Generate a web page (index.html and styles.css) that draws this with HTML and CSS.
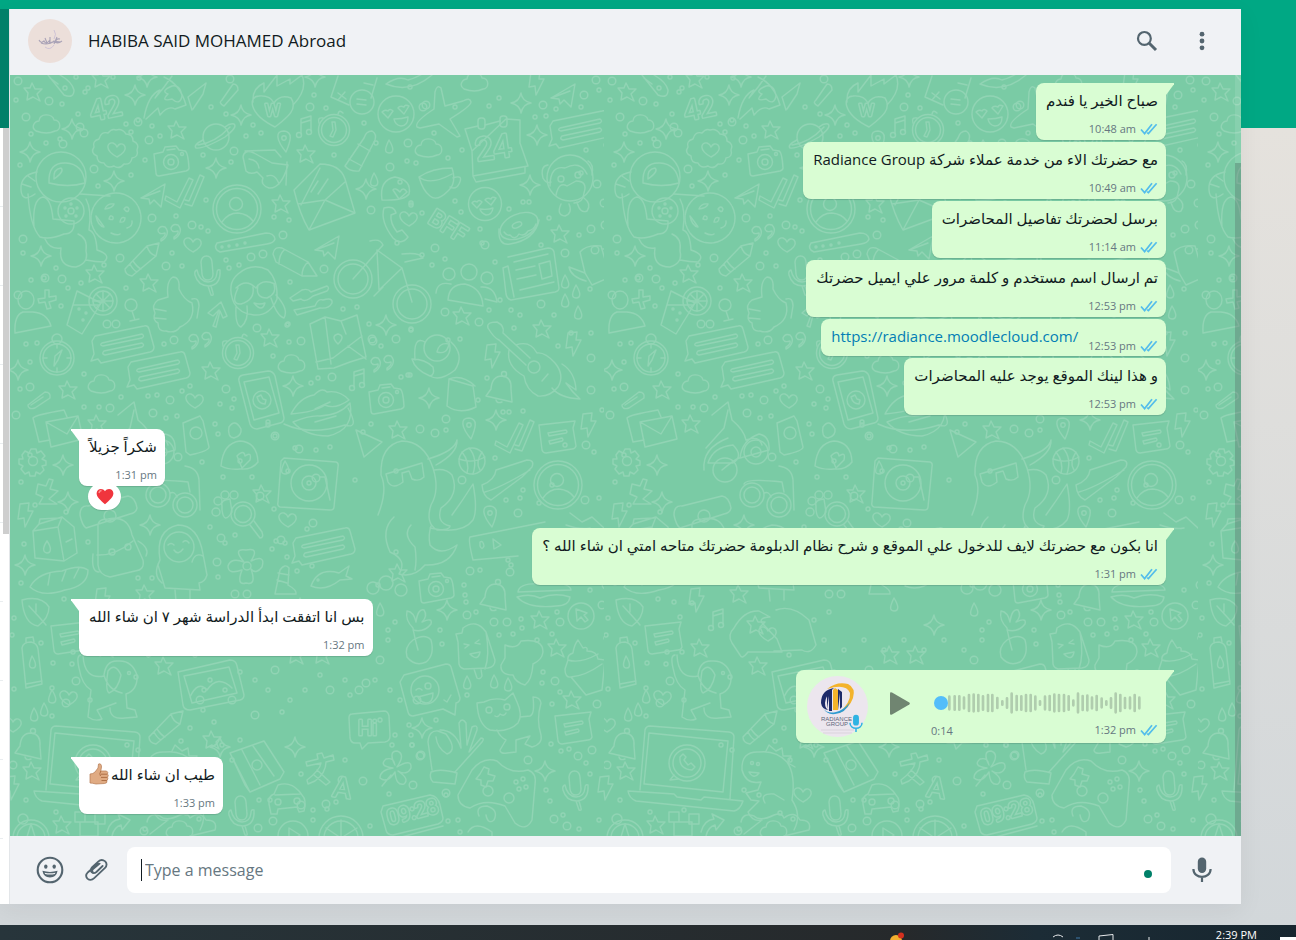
FILE: index.html
```html
<!DOCTYPE html>
<html lang="en">
<head>
    <meta charset="UTF-8">
    <meta name="viewport" content="width=device-width, initial-scale=1.0">
    <title>WhatsApp</title>
    <link rel="stylesheet" href="styles.css">
</head>
<body>
    <!-- shared icons -->
    <svg class="defs" aria-hidden="true">
        <symbol id="ticks" viewBox="0 0 18 12">
            <path d="M1 6.5 L4.6 10.6 L12 1.2 M7.2 9.6 L8.4 10.6 L16.6 1.2" fill="none" stroke="#53bdeb" stroke-width="1.7"/>
        </symbol>
        <symbol id="mic" viewBox="0 0 20 26">
            <rect x="5.8" y="0.5" width="8.4" height="15.5" rx="4.2" fill="currentColor"/>
            <path d="M1.4 12 C1.4 22.5 18.6 22.5 18.6 12 M10 19.5 V25" fill="none" stroke="currentColor" stroke-width="2.2"/>
        </symbol>
    </svg>

    <div class="desktop">
        <div class="app">
            <aside class="sidebar">
                <div class="sidebar-header"></div>
                <div class="sidebar-list">
                    <div class="sidebar-rows"></div>
                    <div class="sidebar-thumb"></div>
                </div>
            </aside>

            <main class="chat">
                <header class="chat-header">
                    <svg class="avatar" viewBox="0 0 44 44" aria-hidden="true">
                        <circle cx="22" cy="22" r="22" fill="#ecdfda"/>
                        <path d="M11 21 q2 4 5 1 q2 4 5 0 q1 4 5 0 q3 4 8 0 M13 24 q5 2 9 0 t11 -1 M17 19 l2 5 M22 18 v7 M29 18 l-3 7 M32 20 q-5 -1 -4 4" fill="none" stroke="#aaa3b7" stroke-width="1.1"/>
                        <path d="M26 11 q3 4 0 9 M17 28 q5 4 9 -2" fill="none" stroke="#cfc3d6" stroke-width="1"/>
                    </svg>
                    <h1>HABIBA SAID MOHAMED Abroad</h1>
                    <button type="button" class="icon-button" aria-label="Search">
                        <svg width="22" height="22" viewBox="0 0 22 22"><circle cx="8.4" cy="8.4" r="6.4" fill="none" stroke="currentColor" stroke-width="2.2"/><path d="M13 13 L20 20" stroke="currentColor" stroke-width="3"/></svg>
                    </button>
                    <button type="button" class="icon-button" aria-label="Menu">
                        <svg width="6" height="20" viewBox="0 0 6 20" fill="currentColor"><circle cx="3" cy="3.2" r="2.4"/><circle cx="3" cy="10" r="2.4"/><circle cx="3" cy="16.8" r="2.4"/></svg>
                    </button>
                </header>

                <section class="conversation">
                    <svg class="wallpaper" aria-hidden="true">
                        <defs>
                            <marker id="dot" class="line" markerUnits="userSpaceOnUse" overflow="visible"><circle r="2"/></marker>
                            <marker id="ring" class="line" markerUnits="userSpaceOnUse" overflow="visible"><circle r="3.8"/></marker>
                            <marker id="star" class="line" markerUnits="userSpaceOnUse" overflow="visible"><path d="M-1 -9 L2 -3 L9 -3 L4 2 L7 9 L0 5 L-6 8 L-5 1 L-9 -4 L-3 -4 Z"/></marker>
                            <marker id="sparkle" class="line" markerUnits="userSpaceOnUse" overflow="visible"><path d="M0 -10 Q1 -2 10 0 Q2 1 0 10 Q-1 2 -10 0 Q-2 -1 0 -10 Z"/></marker>
                            <marker id="heart" class="line" markerUnits="userSpaceOnUse" overflow="visible"><path d="M1 7 C-12 0 -9 -8 -3 -7 Q0 -6 1 -3 Q4 -8 8 -5 C12 0 5 5 1 7 Z"/></marker>
                            <marker id="drop" class="line" markerUnits="userSpaceOnUse" overflow="visible"><path d="M0 -7 C5 1 5 6 0 6 C-5 6 -4 1 0 -7 Z"/></marker>
                            <marker id="bolt" class="line" markerUnits="userSpaceOnUse" overflow="visible"><path d="M-5 -11 L4 -12 L3 -4 L8 -4 L0 12 L-1 3 L-7 4 Z"/></marker>
                            <marker id="quote" class="line" markerUnits="userSpaceOnUse" overflow="visible"><path d="M-8 5 Q-3 2 -4 -1 Q-11 1 -11 -4 Q-9 -9 -4 -7 C1 -2 -3 5 -8 7 Z M5 3 Q10 0 9 -3 Q2 -1 2 -6 Q4 -11 9 -9 C14 -4 10 3 5 5 Z"/></marker>
                            <marker id="note" class="line" markerUnits="userSpaceOnUse" overflow="visible"><path d="M-3 7 V-8 L7 -11 V4 M-3 -4 L7 -7"/><circle cx="-5" cy="8" r="2.5"/><circle cx="5" cy="5" r="2.5"/></marker>
                            <marker id="cloud" class="line" markerUnits="userSpaceOnUse" overflow="visible"><path d="M-11 7 C-17 3 -12 -3 -8 -3 C-7 -12 6 -10 7 -4 C15 -4 14 7 8 7 Q0 11 -11 7 Z"/></marker>
                            <marker id="bubble" class="line" markerUnits="userSpaceOnUse" overflow="visible"><path d="M-27 -9 L22 -19 Q26 -20 27 -16 L32 2 Q32 6 28 7 L-21 18 L-24 14 L-31 16 L-28 9 L-30 -4 Z M-20 -2 L20 -11 Q23 -9 20 -7 L-19 1 Q-23 0 -20 -2 Z M-18 6 L20 -2 Q23 0 20 2 L-17 10 Q-21 9 -18 6 Z"/></marker>
                            <marker id="memo" class="line" markerUnits="userSpaceOnUse" overflow="visible"><path d="M-18 -11 L18 -15 L16 -8 L19 10 Q18 13 15 13 L-11 17 Q-14 17 -15 14 Z M-9 -3 L9 -6 Q11 -4 9 -3 L-8 0 Z M-8 5 L5 2 Q7 4 5 5 L-7 8 Z"/></marker>
                            <marker id="pencil" class="line" markerUnits="userSpaceOnUse" overflow="visible"><path d="M17 -17 L14 -4 L-10 16 Q-17 15 -17 9 L5 -14 Z M5 -14 Q7 -6 14 -4 M-12 4 Q-9 10 -5 12 M-9 1 Q-5 7 -1 9"/></marker>
                            <marker id="camera" class="line" markerUnits="userSpaceOnUse" overflow="visible"><path d="M-17 -8 L-8 -10 L-6 -15 L5 -16 L8 -12 L14 -11 Q17 -10 18 6 Q18 8 15 9 L-12 14 Q-15 14 -15 11 Z M-4 -12 L4 -13"/><circle r="7.5"/><circle r="3"/><circle cx="11" cy="-8" r="1.5"/></marker>
                            <marker id="checks" class="line" markerUnits="userSpaceOnUse" overflow="visible"><path d="M-19 3 L-8 9 L4 -15 L8 -13 L-5 15 L-20 7 Z M0 7 L4 8 L15 -18 L19 -16 L7 13 L0 11"/></marker>
                            <marker id="micline" class="line" markerUnits="userSpaceOnUse" overflow="visible"><path d="M-6 -13 C-5 -21 4 -21 5 -13 L6 -1 C6 7 -4 7 -5 -1 Z M-10 -5 Q-13 -4 -12 0 Q-9 11 2 11 Q14 10 13 -5 Q10 -6 10 -2 Q9 7 1 7 Q-8 6 -10 -5 Z M1 11 L4 20 Q7 21 6 18 L4 11"/></marker>
                            <marker id="pin" class="line" markerUnits="userSpaceOnUse" overflow="visible"><path d="M2 11 C-8 -1 -9 -10 0 -10 C9 -9 7 -1 2 11 Z"/><circle cy="-3" r="2.2"/></marker>
                            <marker id="person" class="line" markerUnits="userSpaceOnUse" overflow="visible"><circle r="24"/><circle r="20.5"/><circle cx="-1" cy="-5" r="6.5"/><path d="M-15 13 Q-9 4 1 4 Q11 5 16 12"/></marker>
                            <marker id="bell" class="line" markerUnits="userSpaceOnUse" overflow="visible"><path d="M-14 8 L-9 1 Q-8 -12 2 -12 Q12 -11 11 1 L12 14 Z M-4 12 Q-3 16 2 14"/><circle cx="4" cy="-14" r="2.5"/></marker>
                            <marker id="bottle" class="line" markerUnits="userSpaceOnUse" overflow="visible"><path d="M-10 -16 Q-9 -22 -1 -22 Q5 -21 6 -15 L10 20 L-6 24 Z M-6 -21 L-6 -26 L1 -27 L2 -22 M-6 20 L10 17 M0 -8 C5 0 4 4 1 4 C-4 4 -3 -1 0 -8 Z"/></marker>
                            <marker id="clock" class="line" markerUnits="userSpaceOnUse" overflow="visible"><circle r="15.5"/><circle r="12.5"/><path d="M-2 -8 L1 -8 L2 0 L-1 7 L-4 6 L-1 0 Z M-11 -12 Q-17 -13 -15 -7 M4 -16 Q5 -21 9 -17"/></marker>
                            <marker id="plane" class="line" markerUnits="userSpaceOnUse" overflow="visible"><path d="M-12 3 L12 -11 L8 12 L1 5 L-3 9 L-4 4 Z L7 -4"/></marker>

                            <pattern id="doodles" patternUnits="userSpaceOnUse" width="594" height="790">
                                <g class="line" transform="translate(-10 -75)">
                                    <!-- small scattered shapes -->
                                    <polyline class="dots" points="65,88 99,103 76,77 85,92 60,139 31,134 113,77 62,104 78,114 126,124 46,143 20,165 152,126 160,136 138,120 131,132 145,160 211,107 226,114 203,155 231,162 98,186 131,175 206,200 201,227 176,216 208,231 246,136 261,133 253,125 314,95 326,108 364,123 334,155 376,143 407,161 411,205 397,243 274,217 289,220 410,87 16,100 88,88 139,78 400,182 416,163 434,133 448,158 455,107 462,150 489,106 499,98 546,116 535,117 556,109 581,107 581,173 606,145 586,150 599,90 411,203 422,213 455,201 480,229 509,209 523,202 549,218 541,245 579,235 529,202 422,255 445,259 482,243 495,262 432,265 461,212 411,330 448,340 489,310 511,310 520,315 500,300 554,315 590,289 571,333 558,346 591,333 514,328 460,339 487,378 410,375 23,253 56,268 44,278 31,280 81,283 68,288 104,265 126,288 172,253 182,266 61,306 30,362 37,343 26,344 84,374 121,397 148,396 157,395 164,344 182,391 226,260 229,268 239,265 290,282 287,325 289,342 273,356 288,324 343,309 357,307 411,329 369,324 381,346 401,377 408,375 311,383 318,378 215,424 220,404 177,416 232,408 99,407 84,407 20,389 166,418 190,386 363,432 234,399 30,455 35,505 21,482 24,544 21,583 66,512 88,542 152,578 138,578 218,434 202,462 223,477 240,461 252,477 268,425 275,436 288,471 274,509 295,448 316,450 330,447 355,480 371,424 396,471 218,577 225,543 210,527 235,535 272,549 276,541 287,557 285,543 297,571 312,566 307,529 378,585 396,552 446,430 478,400 503,412 509,412 523,411 495,458 506,500 520,498 539,503 552,485 565,445 594,452 602,410 599,498 523,490 464,585 480,570 465,595 511,565 508,560 590,590 466,602 440,630 442,644 476,612 499,635 513,634 522,628 521,619 557,612 552,634 543,672 542,683 560,692 552,704 467,695 436,720 411,735 412,745 537,640 606,638 14,618 41,643 12,635 53,663 72,664 88,652 52,688 52,716 90,700 86,617 98,603 64,599 80,602 73,652 14,689 551,744 561,751 569,749 586,763 590,774 546,790 550,801 563,815 579,829 599,820 446,795 458,820 448,821 460,832 409,725 127,745 138,750 181,741 196,760 190,728 203,710 214,722 222,745 232,760 240,740 225,690 210,680 240,672 255,680 268,690 290,700 282,712 305,690 320,675 345,680 350,695 375,680 390,690 400,700 380,720 395,735 392,745 345,760 301,774 412,745 389,794 313,820 313,810 327,809 336,802 370,826 186,813 199,819 145,829 56,812 26,800 90,810 150,790 165,795 270,800 259,800 230,640 250,650 270,640 290,650 310,640 330,650 350,640 370,650 388,640 395,622 388,630 220,620 235,612 195,655 204,690"/>
                                    <polyline class="rings" points="18,81 26,117 49,101 84,133 63,144 80,127 94,169 149,140 234,151 152,218 192,225 138,122 283,235 310,107 423,107 408,143 371,210 390,167 230,79 543,105 584,95 596,80 597,184 604,203 591,229 605,225 435,248 485,245 565,253 595,250 426,105 445,312 479,322 541,304 591,358 591,390 23,239 18,295 120,258 166,266 62,279 45,278 251,257 263,254 324,269 107,324 116,324 174,340 257,328 301,341 372,339 396,339 373,341 226,389 332,377 170,400 153,413 110,408 16,415 30,387 260,496 178,457 275,436 299,449 221,538 217,562 281,540 313,523 235,594 247,594 316,478 446,419 435,433 420,429 586,445 606,585 462,480 585,500 518,513 470,571 510,572 467,615 507,622 494,622 560,622 602,605 555,681 597,704 578,756 592,750 554,819 567,826 420,756 446,793 528,760 13,765 66,703 76,681 359,690 366,683 421,755 417,700 342,780 363,781 273,821 258,828 144,831 326,804 413,785 301,805 232,700 255,715 275,670 330,690 380,660 200,700"/>
                                    <polyline class="stars" points="33,92 177,130 306,154 281,204 560,234 95,274 149,283 462,316 68,390 270,338 211,371 97,424 398,430 542,329 262,494 145,594 162,625 540,620 557,648 572,700 32,771 62,825 106,648 164,666 398,573 101,79 322,655 212,740 296,655"/>
                                    <polyline class="sparkles" points="135,95 72,129 30,152 216,168 241,115 366,189 114,181 521,103 537,135 530,185 41,256 18,370 293,386 386,325 63,465 68,502 150,525 25,565 447,610 422,728 545,771 496,420 429,398 220,747 295,747 315,77 147,77 340,625"/>
                                    <polyline class="hearts" points="192,245 408,219 194,401 287,520 68,698 12,725 173,634 208,795 116,150"/>
                                    <polyline class="drops" points="374,180 389,147 565,282 576,292 565,301 578,313 467,683 494,682 508,685 52,697 44,710 34,715 285,468 300,605 380,610"/>
                                    <polyline class="bolts" points="536,83 573,344 492,356 588,425 605,788 11,788 25,515 102,600"/>
                                    <polyline class="quotes" points="169,234 200,342 382,365"/>
                                    <polyline class="notes" points="304,127 357,380 122,620"/>
                                    <polyline class="clouds" points="47,124 429,148 102,384 292,364 475,82 180,830"/>
                                    <polyline class="bubbles" points="580,130 122,345 158,371 323,547"/>
                                    <polyline class="memos" points="557,436 69,637 573,727"/>
                                    <polyline class="pencils" points="142,260 166,728"/>
                                    <polyline class="cameras" points="171,162 386,400 436,589"/>
                                    <polyline class="checks" points="185,193 515,438"/>
                                    <polyline class="mics" points="207,275 575,790 241,815"/>
                                    <polyline class="pins" points="284,141 469,428 490,516"/>
                                    <polyline class="people" points="237,209 558,485"/>
                                    <polyline class="bells" points="500,388 29,745 494,596"/>
                                    <polyline class="bottles" points="32,664 626,664"/>
                                    <polyline class="clocks" points="334,130 238,353"/>
                                    <polyline class="planes" points="153,195 563,95 327,247"/>

                                    <!-- lettering -->
                                    <text x="92" y="121" font-size="28" transform="rotate(-12 92 121)">42</text>
                                    <text x="477" y="161" font-size="32" transform="rotate(-8 477 161)">24</text>
                                    <text x="427" y="222" font-size="23" transform="rotate(32 427 222)">BFF</text>
                                    <text x="265" y="116" font-size="17">W</text>
                                    <text x="358" y="735" font-size="20">Hi</text>
                                    <text x="389" y="825" font-size="21" transform="rotate(-14 389 825)">09:28</text>
                                    <text x="332" y="796" font-size="28" transform="rotate(8 332 796)">A</text>

                                    <path d="M352 714 L384 711 Q388 711 389 716 L390 736 Q390 741 385 742 L368 743 L362 749 L360 743 L355 743 Q351 743 350 738 L349 718 Q349 714 352 714 Z"/>

                                    <!-- top band -->
                                    <path d="M48 75 L64 95 Q74 99 74 90 Q72 82 60 75 M50 78 L58 84 M144 118 Q148 95 160 90 L155 98 Q164 88 172 76 M146 119 L158 108 L160 115 Q168 105 175 109 L186 105 M164 77 Q180 84 186 105 M172 86 Q160 91 168 94 Q160 102 172 99 Q180 106 182 96 Q180 84 172 86 M192 110 L188 97 L206 83 L203 94 L193 109 M222 100 Q218 103 224 106 L238 90 Q238 84 233 84 Z"/>
                                    <path d="M275 127 C247 113 249 96 259 96 Q270 95 274 103 Q280 94 291 98 C299 110 285 119 275 127 Z M253 102 Q252 88 264 83 L264 92 L277 75 L277 86 L290 79 L290 84 L302 75 Q308 90 293 105"/>
                                    <path d="M331 97 L338 76 M377 78 L371 98 M331 97 L349 105 M338 93 L346 99 M345 92 L338 100 M364 83 L373 85 M357 99 L366 100 M357 104 L366 105"/>
                                    <circle cx="362" cy="102" r="12"/>
                                    <path d="M386 84 Q399 75 408 80 Q420 77 430 68 M386 84 Q410 94 432 75"/>
                                    <circle cx="396" cy="114" r="18"/><circle cx="485" cy="204" r="16.5"/>
                                    <path d="M382 112 l6 6 5 -7 q-3 -3 -5 0 q-3 -2 -6 1 Z M398 108 l6 6 5 -8 q-4 -2 -5 1 q-4 -2 -6 1 Z M394 119 Q402 119 408 117 Q408 126 401 126 Q395 125 394 119 Z M472 203 l5 5 5 -6 q-3 -3 -5 0 q-3 -2 -5 1 Z M485 200 l6 5 5 -7 q-4 -2 -5 1 q-4 -2 -6 1 Z M480 209 Q488 210 493 208 Q492 215 486 215 Q481 213 480 209 Z"/>
                                    <path d="M417 127 Q414 122 434 109 L435 92 Q437 84 441 88 L445 106 L463 101 Q470 97 471 102 Q471 106 450 119 L460 136 L457 137 L439 124 L420 128 Z"/>
                                    <path d="M465 129 L478 126 M485 125 L500 121 M506 119 L520 120 L520 143 L528 166 L473 176 L472 151 Z M465 129 L472 151 M473 176 L476 182 L525 173 L525 167"/>
                                    <rect x="478" y="118" width="7" height="11" rx="3"/><rect x="500" y="116" width="7" height="11" rx="3"/>

                                    <!-- scallop badge, planet, glasses -->
                                    <path d="M116 130 Q122 128 126 134 Q133 134 133 141 Q140 144 137 150 Q139 157 132 158 Q131 165 124 164 Q119 170 114 166 Q107 169 104 163 Q97 163 97 156 Q90 153 94 147 Q92 141 99 139 Q101 131 108 133 Q112 128 116 130 Z"/>
                                    <circle cx="216" cy="137" r="13"/>
                                    <path d="M203 140 Q193 145 196 148 Q204 149 225 137 Q238 127 234 124 Q230 123 225 127 M198 145 Q215 143 230 127"/>
                                    <path d="M243 157 Q244 149 254 153 L272 163 L288 165 Q281 189 269 188 Q260 185 263 178 L257 172 Q250 175 246 171 Z M249 159 Q258 160 259 168 M267 176 Q275 173 279 184 M245 151 L275 150 L281 157 M286 185 L287 162"/>
                                    <path d="M345 166 L364 138 Q366 131 372 131 Q377 134 375 140 L359 171 Q350 172 345 166 Z M349 159 L362 166 M358 144 L370 151"/>

                                    <!-- astronaut and cookie -->
                                    <circle cx="61" cy="177" r="25"/>
                                    <path d="M49 183 Q48 162 66 163 Q83 164 85 183 Q68 188 49 183 Z M54 179 Q53 169 61 168 Q65 171 54 179 Z M37 172 Q20 175 21 190 Q22 203 35 194 M22 184 L31 187 M28 176 L35 181 M28 194 Q30 226 40 237 Q50 240 64 234 Q75 234 74 221 L53 219 Q51 198 43 197 Q32 199 34 227 M45 239 Q50 250 61 248 Q58 267 76 267 Q89 263 86 251 Q88 238 78 234 M86 199 Q92 210 89 230 Q96 232 97 250 Q112 255 104 262 Q96 262 86 260 M80 194 L110 196"/>
                                    <circle cx="71" cy="211" r="13"/><circle cx="71" cy="211" r="3"/><circle cx="71" cy="204" r="1"/><circle cx="77" cy="208" r="1"/><circle cx="65" cy="208" r="1"/><circle cx="76" cy="216" r="1"/><circle cx="66" cy="216" r="1"/>
                                    <circle cx="116" cy="218" r="25" stroke-dasharray="8 1"/>
                                    <path d="M105 209 q2 -6 9 -5 q-1 4 -9 5 M96 216 q2 10 8 11 q-4 -6 -8 -11 M109 219 q1 -5 4 -2 q1 4 -4 2 M120 222 q1 -6 5 -4 q0 5 -5 4 M132 221 q1 5 -5 7 M111 233 q6 3 9 1 M124 209 q3 -4 5 0 q-1 5 -5 0"/>

                                    <!-- envelope, password, phone handset -->
                                    <path d="M294 190 L320 164 Q340 164 345 179 L355 213 L309 230 Q300 215 294 190 Z M301 205 L320 168 M298 204 L325 200 L355 213 M309 230 L325 200 L345 182 M311 192 L318 181 M318 194 L328 179"/>
                                    <path d="M217 243 L266 233 Q274 233 275 239 Q274 243 267 244 L220 252 Q213 249 217 243 Z"/><circle cx="222" cy="247" r="1"/><circle cx="229" cy="246" r="1"/><circle cx="237" cy="245" r="1"/><circle cx="245" cy="243" r="1"/>
                                    <path d="M384 208 Q380 221 393 238 Q401 246 408 237 L402 230 L397 232 Q390 223 391 215 L396 213 Q394 205 384 208 Z M382 200 Q379 180 395 177 Q412 180 409 194 Q404 201 382 200 M393 190 l6 9 8 -7 q-4 -6 -7 0 q-5 -5 -7 -2"/>

                                    <!-- monkey, cup, donut -->
                                    <circle cx="570" cy="178" r="23"/><circle cx="561" cy="179" r="3"/><circle cx="578" cy="175" r="3"/>
                                    <path d="M548 165 Q540 166 543 178 Q546 184 551 182 M588 161 Q594 164 592 175 M556 195 Q559 181 567 186 L576 181 Q588 181 584 193 Q583 203 574 203 M550 186 Q550 165 565 168 Q580 160 587 174 M561 204 Q556 215 565 216 Q573 213 569 204 M577 202 Q580 214 587 211 Q592 204 584 198"/>
                                    <path d="M419 177 Q432 168 452 168 Q457 183 448 191 Q437 202 430 196 Q423 191 419 177 Z M419 177 Q430 186 452 174 M453 178 Q464 174 459 184 Q456 190 450 187"/>
                                    <ellipse cx="519" cy="226" rx="20" ry="12" transform="rotate(-24 519 226)"/><ellipse cx="517" cy="225" rx="5" ry="2.5" transform="rotate(-24 517 225)"/>
                                    <path d="M499 229 Q498 246 510 244 Q535 240 539 220 M504 232 q3 4 6 3 q5 6 9 -1 q5 3 9 -3 q6 -1 8 -7"/>

                                    <!-- newspaper, jug, group, bird, guitar -->
                                    <path d="M508 257 L548 248 Q553 248 554 252 L559 288 Q559 291 555 292 L511 300 Q507 299 506 294 L503 268 L508 266 L514 297 M514 262 L548 254 M516 270 L535 266 M517 279 L536 275 M520 290 L554 282 M539 264 L550 261 L552 276 L542 279 Z"/>
                                    <path d="M580 252 Q587 244 601 246 L610 277 L592 285 L585 273 L569 267 Q571 277 586 281 M580 252 L585 273 M602 249 Q612 248 609 266"/>
                                    <circle cx="469" cy="272" r="8"/><circle cx="449" cy="274" r="6"/><circle cx="487" cy="278" r="6"/>
                                    <path d="M448 300 Q449 284 465 284 Q482 288 483 306 Z M436 293 Q437 281 451 284 M481 287 Q495 286 497 302 L485 299"/>
                                    <circle cx="437" cy="348" r="13"/>
                                    <path d="M425 342 Q413 335 415 360 M451 342 Q465 355 455 370 Q440 382 430 376 Q415 370 412 359 Q425 359 433 367 Q435 375 430 376 M437 352 Q439 342 449 344 Q447 355 437 352 Z"/>
                                    <path d="M488 328 Q486 322 497 322 Q505 326 503 333 L530 358 M499 340 L526 365 M488 328 Q494 338 499 340 M516 345 Q530 340 537 353 Q545 352 555 363 Q565 375 558 387 Q550 397 538 396 Q526 390 524 376 Q506 366 509 350 M562 364 Q575 372 576 390 L566 383 Q572 392 580 399 Q560 398 552 388 M542 381 L548 374"/>
                                    <circle cx="534" cy="367" r="6"/>
                                    <path d="M449 379 L473 386 L476 407 Q460 415 447 406 Z M449 379 Q462 374 475 386"/>

                                    <!-- bicycle -->
                                    <circle cx="353" cy="279" r="19"/><circle cx="353" cy="279" r="15"/><circle cx="412" cy="304" r="19"/><circle cx="412" cy="304" r="15"/>
                                    <path d="M353 279 L383 245 Q380 238 370 241 M377 250 L379 290 L402 268 Z M402 268 L412 302 M402 254 Q420 252 423 258 L405 262 M374 296 L383 287"/>
                                    <path d="M273 254 Q274 246 282 248 L308 262 L317 276 L302 276 L276 262 Z M308 262 Q302 267 302 276 M284 250 Q279 255 279 264"/>

                                    <!-- person, glass with lemon, thumb, happy monkey -->
                                    <ellipse cx="26" cy="300" rx="8" ry="9"/>
                                    <path d="M15 333 Q14 315 23 312 L33 312 Q47 313 51 326 Z M45 290 l4 0 0 7 7 -1 0 4 -7 2 2 6 -4 1 -2 -7 -6 1 -1 -4 7 -1 Z"/>
                                    <path d="M77 291 L101 303 L82 334 L67 325 Z M73 305 L98 305"/><circle cx="79" cy="309" r="1"/><circle cx="86" cy="313" r="1"/><circle cx="83" cy="320" r="1"/>
                                    <circle cx="103" cy="301" r="14"/><circle cx="103" cy="301" r="10"/>
                                    <path d="M103 291 V311 M93 301 H113 M96 294 L110 308 M110 294 L96 308"/>
                                    <circle cx="131" cy="305" r="6"/><path d="M132 311 L135 320 M130 321 L139 319"/>
                                    <path d="M158 300 Q151 305 155 313 Q152 320 158 323 Q158 332 166 331 Q175 334 180 327 Q196 320 192 303 Q184 300 179 289 Q180 277 173 277 Q166 281 168 297 Z M192 299 Q199 297 199 306 L197 318 M155 309 L166 311 M155 318 L166 319"/>
                                    <path d="M234 303 Q226 284 238 274 Q252 262 268 270 Q278 280 277 299 Q270 316 254 315 Q240 314 234 303 Z M236 288 Q246 278 256 288 Q262 278 275 284 M238 288 Q230 305 241 304 Q255 300 253 287 M258 285 Q255 298 267 298 Q277 294 274 284 M236 307 Q235 325 241 327 Q249 320 247 306 M271 298 Q277 316 284 318 Q289 309 276 295 M254 303 Q260 305 265 303 Q262 313 254 303 Z"/>
                                    <path d="M213 326 L219 310 L213 316 L208 313 L221 302 L227 316 L223 318 L220 311 L216 327 Z"/>
                                    <path d="M290 298 L302 290 Q308 288 311 292 L327 286 Q330 288 327 291 L313 296 Q305 303 301 299 L293 301 Z M294 310 L315 306 Q318 298 323 300 Q333 297 332 303 Q329 309 320 308 L297 315 Z"/>

                                    <!-- compass, map, phone, lips, envelopes -->
                                    <circle cx="57" cy="358" r="17"/><circle cx="57" cy="358" r="14"/><circle cx="57" cy="339" r="5"/>
                                    <path d="M62 350 L58 360 L54 366 L55 356 Z M57 344 V348 M57 368 V372 M43 358 H47 M67 358 H71"/>
                                    <path d="M310 324 L325 317 L341 321 L357 315 L366 357 L350 362 L334 368 L318 369 Z M325 317 L331 364 M341 321 L346 334 M316 362 L333 358 L362 336 M348 346 L366 359 M338 344 Q330 336 338 334 Q346 336 338 344"/>
                                    <path d="M239 381 Q238 376 243 375 L268 371 Q273 371 275 376 L284 418 Q284 422 280 423 L257 429 Q252 429 250 424 Z M244 382 L269 377 L279 413 L254 420 Z"/>
                                    <circle cx="262" cy="400" r="9"/><path d="M257 397 q2 7 8 7 l1 -4 -3 -1 -2 -4 Z"/><circle cx="268" cy="422" r="2"/>
                                    <path d="M291 414 Q300 397 314 395 Q322 387 327 392 Q340 390 349 400 Q335 410 325 405 Q315 412 291 414 Z M293 422 Q310 415 320 416 Q340 415 350 403 Q355 430 328 436 Q305 436 293 422 Z M315 409 L330 402 M315 422 L336 416"/>
                                    <path d="M28 405 L45 392 Q51 392 50 398 L35 408 Q28 410 28 405 Z M31 405 L43 397"/>
                                    <path d="M33 418 Q35 415 64 410 L67 417 M33 418 L39 442 L50 440 M46 422 L78 416 L83 439 L51 447 Z M46 422 L67 434 L78 416"/>
                                    <path d="M118 415 L134 402 L138 420 Q150 430 152 440 Q165 435 168 445 M134 410 L130 428 L112 448 M110 470 Q108 448 134 438 M114 463 Q119 447 139 445 Q150 456 139 463 Z M128 470 Q140 460 145 458 M146 458 Q148 440 165 434 Q176 436 175 450 Z"/>
                                    <circle cx="131" cy="470" r="12"/><circle cx="162" cy="452" r="12"/><circle cx="162" cy="452" r="5"/>
                                    <path d="M183 423 L200 416 L203 421 L209 447 Q209 451 190 455 L186 452 Z"/><circle cx="196" cy="433" r="6"/>

                                    <!-- gear, milk, backpack, glasses -->
                                    <circle cx="33" cy="461" r="4.5"/><path d="M31 449 h5 l1 4 4 -2 4 5 -3 3 4 2 0 4 -4 1 2 4 -4 4 -4 -2 -1 4 -5 0 -1 -4 -4 2 -4 -5 2 -3 -4 -2 0 -5 4 0 -1 -4 3 -4 4 2 Z"/>
                                    <path d="M38 484 l8 2 3 -7 4 1 -3 9 8 2 -9 8 8 5 -18 0 4 -7 -7 -3 Z"/>
                                    <path d="M39 524 L62 517 L74 527 L77 553 L64 561 L35 558 L33 531 Z M33 531 L58 527 L64 561 M58 527 L62 517 M39 524 L40 519 L60 518 M47 541 C52 548 51 553 47 553 C42 552 43 547 47 541 M66 542 L72 539"/>
                                    <path d="M98 527 Q97 519 108 519 Q128 515 132 535 L143 560 Q145 570 135 571 L110 577 Q99 575 98 565 Z M80 515 Q80 505 88 506 L128 496 Q135 497 137 508 Q136 513 130 514 L86 528 Q82 525 80 515 Z M97 555 Q115 556 133 541 M93 554 Q91 572 99 572 M138 541 Q150 548 146 556"/>
                                    <circle cx="110" cy="516" r="6"/><circle cx="112" cy="552" r="3"/><circle cx="128" cy="547" r="3"/>
                                    <circle cx="158" cy="495" r="12"/><circle cx="158" cy="495" r="8"/><circle cx="185" cy="505" r="12"/><circle cx="185" cy="505" r="8"/>
                                    <path d="M150 484 Q152 478 188 482 L190 492 M170 493 Q175 491 177 497 M185 466 Q198 468 199 480 L200 510"/>
                                    <circle cx="243" cy="514" r="12"/><circle cx="243" cy="514" r="8.5"/>
                                    <path d="M250 525 L260 538 Q264 538 262 532 L254 521 M222 506 Q220 500 230 499 L232 512 Q224 525 222 510 Z"/>
                                    <circle cx="216" cy="512" r="4"/><circle cx="218" cy="501" r="4"/><circle cx="225" cy="495" r="4"/><circle cx="234" cy="495" r="4"/>
                                    <path d="M221 466 Q223 443 240 441 Q257 442 258 462 Q252 470 240 469 Q228 470 221 466 Z M237 456 q7 -7 8 0 q7 -5 5 4 l-8 8 Z M229 427 Q235 418 241 429 Q242 436 234 438 Q227 437 229 427"/>
                                    <path d="M284 458 L336 462 Q339 463 338 467 L334 507 Q334 510 330 510 L280 507 Q277 506 278 502 L281 461 Z M320 477 L325 477 L330 500"/>
                                    <circle cx="309" cy="483" r="18"/><circle cx="309" cy="483" r="7"/><circle cx="309" cy="483" r="2"/>
                                    <path d="M284 424 Q310 436 345 425 Q360 430 348 408 M356 430 L382 442 L364 457 Z"/>

                                    <!-- hooded kid, flower, fish, bread -->
                                    <path d="M160 560 Q155 530 178 525 Q198 525 203 554 L207 575 Q205 582 199 583 L200 590 L165 588 L158 565 Z M160 560 Q152 575 162 583 M192 562 Q195 552 203 556"/>
                                    <circle cx="179" cy="547" r="15"/><path d="M168 545 q3 -3 6 0 M183 542 q3 -3 6 1 M174 550 q4 6 9 -1 M175 590 L176 601 M190 590 L190 600"/>
                                    <path d="M244 562 Q232 548 246 550 Q260 547 251 561 Q266 554 262 567 Q256 575 251 569 Q257 586 246 583 Q236 586 242 570 Q228 575 228 566 Q231 557 244 562 Z"/><circle cx="247" cy="566" r="4"/>
                                    <path d="M311 586 Q318 567 339 573 L349 566 L346 576 L352 579 L340 580 Q325 592 311 586 Z"/><circle cx="318" cy="580" r="1"/>
                                    <path d="M30 587 Q38 572 62 571 Q80 564 88 570 Q88 586 65 590 Q42 598 30 587 Z M48 585 L50 573 M62 581 L66 570 M74 578 L79 568"/>
                                    <path d="M22 600 Q41 595 49 607 Q49 618 38 626 Q24 624 22 600 Z M29 606 L40 618 M40 618 L46 625 M36 604 V612"/>
                                    <path d="M275 594 L280 570 Q285 563 289 568 L288 585 Q297 590 296 594 Z M277 580 L287 583 M278 573 L289 575"/>
                                    <circle cx="373" cy="588" r="6"/><circle cx="386" cy="583" r="7"/><circle cx="401" cy="590" r="6"/>

                                    <!-- octopus, ball, sneaker, voice clip -->
                                    <path d="M381 475 Q380 445 402 441 Q424 441 433 468 Q440 490 431 505 Q425 523 437 530 Q450 530 450 526 Q436 523 441 508 Q460 495 452 475 Q446 468 434 470 M381 475 Q388 490 378 515 M394 517 Q380 530 390 552 Q408 560 399 574 Q414 578 425 565 Q450 566 457 545 Q440 557 430 545 Q428 535 431 526 M411 525 Q402 535 415 547 Q417 560 415 570 M428 459 Q455 451 457 440 Q458 453 436 465 M452 515 Q463 500 473 484 Q478 510 473 520 Q462 535 430 528"/>
                                    <path d="M386 474 L422 463 L424 477 Q419 482 412 479 L409 471 L402 473 L403 482 Q393 490 388 482 Z"/>
                                    <circle cx="472" cy="461" r="13"/><path d="M459 459 Q472 464 485 457 M469 448 Q478 458 473 474 M462 452 Q470 462 467 473 M482 452 Q475 463 480 470"/>
                                    <path d="M482 485 Q495 480 496 470 L527 460 Q535 460 532 467 L522 477 L491 500 Q483 497 482 485 Z M485 492 Q500 488 530 470"/>
                                    <path d="M470 537 L545 522 M470 537 Q468 540 473 560 L518 556 M493 539 L501 545 L494 549 Z M480 542 q3 -2 4 4 q-2 5 -4 0 Z"/>
                                    <path d="M570 513 L582 522 L592 517 L604 528 M566 525 Q580 530 590 528"/>

                                    <!-- burger, lolly, plant, cupcake, star creature -->
                                    <path d="M518 592 Q519 582 545 584 Q570 582 571 590 L518 592 M517 597 Q530 593 540 598 Q555 592 570 597 Q569 606 556 606 Q528 609 517 597 Z"/>
                                    <path d="M458 642 L456 634 L462 633 L463 628 Q476 618 486 632 L495 660 Q495 667 488 668 L464 669 Q460 668 459 664 Z M486 632 Q490 655 485 669 M474 669 L477 678 Q480 680 482 676 L481 669 M464 644 l5 1 -4 3 M479 640 l-4 3 5 1 M470 654 L480 652 Q478 662 470 654"/>
                                    <path d="M413 640 Q404 647 407 657 Q415 667 426 662 Q435 655 431 640 Q425 633 413 640 Z M418 650 Q414 635 413 628 Q405 620 407 611 Q414 612 416 622 Q418 608 424 610 Q428 616 422 622 Q433 617 431 624 Q424 633 413 630"/>
                                    <circle cx="581" cy="616" r="13"/><path d="M576 609 L587 613 L584 615 L588 620 L585 622 L581 617 L577 621 Z"/>
                                    <path d="M505 645 Q517 650 521 641 Q543 638 543 652 Q542 660 533 664 Q532 680 525 685 Q515 682 513 675 Q500 675 501 665 L505 658 Z"/>
                                    <path d="M565 669 L568 660 Q567 655 573 653 Q574 645 578 640 L583 648 Q588 646 587 651 Q597 651 598 659 L605 660 L602 690 L586 695 L571 677 Q565 678 565 669 Z M571 677 Q585 676 602 664 M568 660 Q580 664 598 654"/>

                                    <!-- chat face, cat, hand, gamepad -->
                                    <path d="M404 675 L446 664 Q450 664 451 667 L460 698 Q460 702 456 703 L455 715 L443 709 L413 716 Q409 716 408 712 L400 682 Z"/><circle cx="425" cy="690" r="14"/><circle cx="428" cy="686" r="3"/><path d="M416 690 q3 -3 6 0 M418 697 L433 693 Q433 703 426 703 Q420 702 418 697 Z M444 700 l3 2 4 -7"/>
                                    <path d="M477 703 L484 702 Q494 697 505 700 L513 693 L517 702 Q523 715 518 723 Q508 733 490 730 Q478 725 477 703 Z M497 730 Q500 737 506 740 L500 750 Q500 754 507 753 L516 752 L516 740 L530 736 L525 744 L532 747 Q543 744 541 735 Q536 720 541 703 Q540 697 533 697 Q535 714 530 716 L520 717"/><circle cx="489" cy="710" r="3"/><circle cx="507" cy="707" r="3"/><path d="M495 716 q3 2 5 -2 q4 3 6 -1"/>
                                    <path d="M432 770 L428 742 Q429 730 438 731 L446 734 Q458 750 447 754 Q437 748 436 737 M440 730 Q455 730 461 748 L459 723 Q462 717 466 723 L467 745 L472 727 Q478 724 477 730 L469 752 L481 738 Q485 738 482 742 L455 772 M431 772 Q440 768 457 773 L455 784 L433 782 Q429 778 431 772 Z"/>
                                    <path d="M458 795 L472 770 Q483 756 497 761 Q510 775 528 770 Q537 773 535 785 L532 820 Q526 832 515 823 L505 806 Q485 798 470 808 Q458 806 458 795 Z M480 774 l4 -7 5 2 -1 5 7 2 -2 5 -5 0 -2 6 -5 -2 0 -5 -5 -1 Z"/>
                                    <circle cx="488" cy="791" r="5"/><circle cx="509" cy="798" r="5"/><circle cx="516" cy="782" r="2"/><circle cx="523" cy="779" r="2"/><circle cx="519" cy="789" r="2"/><circle cx="526" cy="787" r="2"/>
                                    <path d="M383 806 L430 795 Q438 796 440 805 L443 818 Q443 822 438 824 L393 835 Q387 835 386 830 L381 812 Z M394 839 L443 826"/>
                                    <path d="M468 832 Q475 820 492 832 L492 836 M479 816 Q475 806 487 806 Q499 810 494 820 Q488 825 486 815"/>

                                    <!-- laptop, dog, dinosaur -->
                                    <path d="M46 790 L51 730 Q52 726 56 726 L135 732 Q140 733 140 737 L136 799 M50 784 L55 733 L134 741 L129 792 L51 784 M34 791 L80 794 L83 797 L107 800 L110 797 L149 801 Q146 810 140 811 L42 801 Q35 798 34 791 Z"/>
                                    <circle cx="93" cy="763" r="18"/><circle cx="93" cy="763" r="14"/><path d="M86 757 q-1 12 12 13 l3 -3 -4 -4 -3 2 -4 -5 2 -3 -3 -3 Z M80 775 L76 780 L84 779"/>
                                    <path d="M81 655 Q76 655 79 668 Q82 685 91 690 L88 717 Q95 722 102 719 L97 710 L116 703 M110 708 Q110 720 125 718 L137 717 L135 710 L127 708 L126 694 Q138 690 137 675 Q132 660 118 661 Q106 660 104 675 Q108 690 122 693 M108 671 Q105 690 109 693 Q118 690 121 675 Q115 662 108 671 M83 655 Q84 680 104 676"/>
                                    <circle cx="129" cy="673" r="1.5"/><circle cx="136" cy="677" r="2"/>
                                    <path d="M148 770 Q147 751 165 752 Q182 750 193 762 Q202 775 198 800 Q208 815 200 830 M148 770 Q152 785 167 782 L164 790 L152 793 L157 800 L165 801 L154 812 Q158 822 168 820 L150 834 M172 751 l3 -6 7 6 6 -3 1 8 8 0 -3 7 7 4 M171 803 Q165 793 180 794 L190 800"/>
                                    <circle cx="158" cy="763" r="1.5"/><circle cx="164" cy="764" r="1.5"/><path d="M155 772 L165 773 Q160 780 155 772"/>
                                    <path d="M138 643 Q133 635 140 628 Q150 610 165 611 L176 617 Q163 618 169 624 L183 639 L188 652 L154 652 Q148 660 146 655 Z M182 610 Q198 604 215 620 L222 645 Q216 655 208 650 L180 651"/>
                                    <path d="M178 672 L230 660 Q236 660 237 666 L244 695 Q244 699 240 700 L190 710 Q184 710 183 705 Z M184 676 L229 667 L237 693 L192 703 Z M190 697 Q198 680 207 690 Q218 674 232 688"/>

                                    <!-- box, translate, clover, car -->
                                    <path d="M230 753 L264 741 L284 772 L280 779 L250 792 L245 785 Z M242 750 L260 785 M253 746 L274 776 M230 753 L250 792"/><circle cx="257" cy="765" r="5"/>
                                    <path d="M306 762 L318 759 L317 754 L322 753 L324 758 L333 755 L334 760 L326 762 Q326 773 315 781 L308 784 L307 780 Q320 770 321 763 L307 766 Z M317 770 L330 782 L326 785 L314 775"/>
                                    <path d="M393 768 Q378 766 386 759 Q394 757 395 765 Q388 751 397 751 Q406 754 397 767 Q412 758 411 768 Q407 776 398 771 Q410 779 404 784 Q396 786 395 772 Q387 784 380 778 Q380 770 393 768 Z M391 775 L382 786"/>
                                    <path d="M269 804 Q268 796 274 794 L278 785 Q290 781 299 791 L302 795 Q307 800 304 811 L299 812 L297 807 L278 809 L277 814 L271 814 Z M275 795 L300 794"/><circle cx="278" cy="802" r="3"/><circle cx="297" cy="801" r="3"/>
                                    <circle cx="341" cy="838" r="22"/><circle cx="341" cy="838" r="17"/><path d="M341 820 V838 M326 828 L341 838 L357 828"/>
                                    <circle cx="293" cy="836" r="15"/><path d="M289 828 L300 835 L289 842 Z"/>
                                    <circle cx="31" cy="838" r="18"/><circle cx="31" cy="838" r="14"/><path d="M31 824 L26 840 M31 824 L36 840"/><circle cx="23" cy="819" r="5"/>
                                    <path d="M75 812 h10 v10 h-10 Z M95 814 h10 v10 h-10 Z M85 822 H98 V836 H80 V822 M107 832 Q110 820 120 819 L118 814 L130 820 L122 830 L121 825 Q114 827 112 836"/>
                                    <path d="M147 822 Q149 812 160 816 Q166 822 180 815 Q188 812 190 818 Q200 810 206 820 Q218 820 215 830 L190 836"/>
                                </g>
                            </pattern>
                        </defs>
                        <rect width="100%" height="100%" fill="url(#doodles)"/>
                    </svg>

                    <div class="messages">
                        <article class="bubble out tail">
                            <p dir="rtl">صباح الخير يا فندم</p>
                            <footer><time>10:48 am</time><svg class="ticks"><use href="#ticks"/></svg></footer>
                        </article>
                        <article class="bubble out">
                            <p dir="rtl">مع حضرتك الاء من خدمة عملاء شركة Radiance Group</p>
                            <footer><time>10:49 am</time><svg class="ticks"><use href="#ticks"/></svg></footer>
                        </article>
                        <article class="bubble out">
                            <p dir="rtl">برسل لحضرتك تفاصيل المحاضرات</p>
                            <footer><time>11:14 am</time><svg class="ticks"><use href="#ticks"/></svg></footer>
                        </article>
                        <article class="bubble out">
                            <p dir="rtl">تم ارسال اسم مستخدم و كلمة مرور علي ايميل حضرتك</p>
                            <footer><time>12:53 pm</time><svg class="ticks"><use href="#ticks"/></svg></footer>
                        </article>
                        <article class="bubble out inline">
                            <p><a href="https://radiance.moodlecloud.com/">https://radiance.moodlecloud.com/</a></p>
                            <footer><time>12:53 pm</time><svg class="ticks"><use href="#ticks"/></svg></footer>
                        </article>
                        <article class="bubble out">
                            <p dir="rtl">و هذا لينك الموقع يوجد عليه المحاضرات</p>
                            <footer><time>12:53 pm</time><svg class="ticks"><use href="#ticks"/></svg></footer>
                        </article>

                        <article class="bubble in tail reacted">
                            <p dir="rtl">شكراً جزيلاً</p>
                            <footer><time>1:31 pm</time></footer>
                            <button type="button" class="reaction" aria-label="Reaction">
                                <svg width="18" height="17" viewBox="0 0 18 17"><path d="M9 16.3 C4 12 0.5 9 0.6 5.2 C0.8 0.5 6.8 -0.6 9 3.3 C11.2 -0.6 17.2 0.5 17.4 5.2 C17.5 9 14 12 9 16.3 Z" fill="#f0353d"/><path d="M3 5 Q3.5 2.6 5.6 2.5" fill="none" stroke="#ff8a8c" stroke-width="1.5"/></svg>
                            </button>
                        </article>

                        <article class="bubble out tail first">
                            <p dir="rtl">انا بكون مع حضرتك لايف للدخول علي الموقع و شرح نظام الدبلومة حضرتك متاحه امتي ان شاء الله ؟</p>
                            <footer><time>1:31 pm</time><svg class="ticks"><use href="#ticks"/></svg></footer>
                        </article>

                        <article class="bubble in tail">
                            <p dir="rtl">بس انا اتفقت ابدأ الدراسة شهر ٧ ان شاء الله</p>
                            <footer><time>1:32 pm</time></footer>
                        </article>

                        <article class="bubble out tail first voice">
                            <div class="sender">
                                <svg width="61" height="61" viewBox="0 0 61 61" aria-hidden="true">
                                    <circle cx="30.5" cy="30.5" r="30.5" fill="#ece6ee"/>
                                    <path d="M14 54 H47 M16 57 H45" stroke="#dad3dc" stroke-width="1"/>
                                    <path d="M20 13 Q30 5 41 8 Q49 12 46 22 Q42 33 32 37 Q44 26 43 17 Q39 7 20 13 Z" fill="#f3b32c"/>
                                    <path d="M14 27 Q14 14 27 12 Q19 18 18 27 Q18 33 22 34 Q15 34 14 27 Z" fill="#1d2a69"/>
                                    <path d="M16 32 Q20 38 29 36 Q37 34 43 26 Q39 37 28 38 Q20 39 16 32 Z" fill="#2f9ad0"/>
                                    <path d="M20 33 V18 L25 13 V35 H22 V20 M31 34 V13 L35 16 V31 L33 33 V17" fill="#1d2a69"/>
                                    <path d="M26 34 V14 L28 12 L31 14 V34 Z" fill="#f3b32c"/>
                                    <text x="14" y="45" class="logo-text">RADIANCE</text>
                                    <text x="19" y="50" class="logo-text">GROUP</text>
                                </svg>
                                <svg class="sender-mic" width="14" height="23"><use href="#mic"/></svg>
                            </div>
                            <button type="button" class="play" aria-label="Play">
                                <svg width="20" height="23" viewBox="0 0 20 23"><path d="M0 1.5 Q0 -0.5 2 0.5 L19.3 10.6 Q20.4 11.5 19.3 12.4 L2 22.5 Q0 23.5 0 21.5 Z" fill="#708571"/></svg>
                            </button>
                            <div class="track">
                                <div class="wave">
                                    <svg width="208" height="22" viewBox="0 0 624 66" aria-hidden="true">
                                        <path d="M46 14 V52 M62 13 V53 M76 13 V53 M90 17 V49 M105 9 V57 M119 8 V58 M133 9 V57 M147 13 V53 M162 9 V57 M175 9 V57 M190 18 V48 M205 28 V38 M219 19 V47 M233 5 V61 M248 12 V54 M262 13 V53 M276 9 V57 M290 9 V57 M304 14 V52 M318 28 V38 M333 14 V52 M347 12 V54 M361 8 V58 M375 9 V57 M390 9 V57 M404 13 V53 M418 26 V40 M432 5 V61 M446 12 V54 M460 11 V55 M474 17 V49 M488 12 V54 M503 20 V46 M517 28 V38 M531 19 V47 M545 5 V61 M559 9 V57 M573 18 V48 M588 17 V49 M602 9 V57 M616 17 V49" stroke="#b0cdae" stroke-width="8" stroke-linecap="round"/>
                                    </svg>
                                    <input type="range" min="0" max="14" value="0" aria-label="Playback position">
                                </div>
                            </div>
                            <span class="duration">0:14</span>
                            <footer><time>1:32 pm</time><svg class="ticks"><use href="#ticks"/></svg></footer>
                        </article>

                        <article class="bubble in tail">
                            <p dir="rtl">طيب ان شاء الله<svg class="thumb" width="20" height="22" viewBox="0 0 20 22" role="img" aria-label="thumbs up"><path d="M1 11 Q4 11 6 9 L9 5 L9.5 1 Q12.5 0 12.5 4 L11.8 8 H17.5 Q19.5 9 18.5 11 Q20 12.5 18.6 14.2 Q19.5 16 18 17.3 Q18.5 20.5 15.5 20.5 L7 21 Q3 20 1 20 Z" fill="#e0ab83" stroke="#b57a52" stroke-width="0.7"/><path d="M12 11.2 H18 M12 14.4 H18.2 M12.5 17.5 H17.8 M11.8 8 Q10 11 11.5 13" fill="none" stroke="#a8693f" stroke-width="0.9"/></svg></p>
                            <footer><time>1:33 pm</time></footer>
                        </article>
                    </div>
                    <div class="scrollbar"><div class="scroll-thumb"></div></div>
                </section>

                <form class="composer">
                    <button type="button" class="icon-button" aria-label="Emoji">
                        <svg width="28" height="28" viewBox="0 0 28 28"><circle cx="14" cy="14" r="12.3" fill="none" stroke="currentColor" stroke-width="2.1"/><ellipse cx="9.8" cy="10.6" rx="1.7" ry="2.2" fill="currentColor"/><ellipse cx="18.2" cy="10.6" rx="1.7" ry="2.2" fill="currentColor"/><path d="M6.4 14.8 Q14 17 21.6 14.8 Q20.5 21.4 14 21.4 Q7.5 21.4 6.4 14.8 Z" fill="currentColor"/><path d="M8.6 16.7 Q14 18 19.4 16.7 L18.8 18 Q14 19 9.2 18 Z" fill="#f0f2f5"/></svg>
                    </button>
                    <button type="button" class="icon-button" aria-label="Attach">
                        <svg width="24" height="24" viewBox="0 0 24 24" fill="none" stroke="currentColor" stroke-width="1.8" stroke-linecap="round"><path d="M14 5.5 L4 14.2 Q0.6 17.6 3.4 20.6 Q6.8 23.4 10.2 20.2 L21 10 Q24 6.4 21.2 3.4 Q17.6 0.6 14.2 3.6 M14.2 3.6 L8 9.4 Q5.8 12.2 7.6 14 M7.6 14 Q9.6 16.4 12.4 14 L18.6 8 M8.8 14.2 Q7.4 12.6 9 11 L15.6 5.6"/></svg>
                    </button>
                    <div class="field">
                        <span class="caret"></span>
                        <input type="text" placeholder="Type a message" aria-label="Type a message">
                        <span class="field-dot"></span>
                    </div>
                    <button type="button" class="icon-button" aria-label="Record">
                        <svg width="20" height="26"><use href="#mic"/></svg>
                    </button>
                </form>
            </main>
        </div>
    </div>

    <div class="taskbar">
        <svg class="weather" width="16" height="8" viewBox="0 0 16 8"><circle cx="7" cy="9" r="6" fill="#f3b02f"/><circle cx="12" cy="3.5" r="3" fill="#d3301f"/></svg>
        <svg class="tray" width="104" height="6" viewBox="0 0 104 6" fill="none" stroke="#e8eaec" stroke-width="1"><path d="M2 3 Q7 -1 12 3 M48 6 V2 L62 0.5 V6 M98 3 V6"/><path d="M25 4 H29" stroke="#3f78a8"/></svg>
        <time>2:39 PM</time>
        <span class="notify"></span>
    </div>
</body>
</html>
```

FILE: styles.css
```css
* {
    box-sizing: border-box;
}
body {
    margin: 0;
    height: 100vh;
    display: flex;
    flex-direction: column;
    overflow: hidden;
    font-family: "Open Sans", "Noto Sans", "DejaVu Sans", sans-serif;
    color: #111b21;
}
button {
    padding: 0;
    border: none;
    background: none;
    cursor: pointer;
}
svg {
    display: block;
}
.defs {
    position: absolute;
    width: 0;
    height: 0;
}

.desktop {
    flex: 1;
    min-height: 0;
    display: flex;
    padding: 9px 55px 21px 0;
    background:
        linear-gradient(#00a884, #00a884) top / 100% 128px no-repeat,
        linear-gradient(#e5e2dd 128px, #d2d7da 100%);
}
.app {
    flex: 1;
    display: flex;
    min-width: 0;
    box-shadow: 0 6px 24px rgba(11, 20, 26, 0.06);
}

/* edge of the chat list */
.sidebar {
    width: 9px;
    display: flex;
    flex-direction: column;
    background-color: #fff;
}
.sidebar-header {
    height: 119px;
    background-color: #008069;
}
.sidebar-list {
    flex: 1;
    display: flex;
}
.sidebar-rows {
    flex: 1;
    background: repeating-linear-gradient(#fff 0 78px, #e9edef 78px 79px);
}
.sidebar-thumb {
    width: 6px;
    height: 406px;
    background-color: #cecece;
}

.chat {
    flex: 1;
    min-width: 0;
    display: flex;
    flex-direction: column;
    border-left: 1px solid #e3e6e9;
    background-color: #f0f2f5;
}
.chat-header {
    height: 66px;
    display: flex;
    align-items: center;
    padding: 0 19px 2px 18px;
}
.avatar {
    width: 44px;
    height: 44px;
    margin-right: 16px;
}
.chat-header h1 {
    flex: 1;
    margin: 0;
    font-size: 17px;
    font-weight: 400;
    line-height: 24px;
}
.icon-button {
    width: 40px;
    height: 40px;
    display: flex;
    align-items: center;
    justify-content: center;
    color: #54656f;
}
.chat-header .icon-button + .icon-button {
    margin-left: 15px;
}

.conversation {
    position: relative;
    flex: 1;
    min-height: 0;
    display: flex;
    background-color: #7acba5;
}
.wallpaper {
    position: absolute;
    inset: 0;
    width: 100%;
    height: 100%;
}
.line {
    fill: none;
    stroke: #91d4b4;
    stroke-width: 1.4;
    stroke-linejoin: round;
    stroke-linecap: round;
}
.line text {
    font-family: "Roboto", sans-serif;
    font-weight: 400;
    fill: #7acba5;
    stroke-width: 3;
    paint-order: stroke;
}
.line polyline {
    stroke: none;
}
.dots { marker: url(#dot); }
.rings { marker: url(#ring); }
.stars { marker: url(#star); }
.sparkles { marker: url(#sparkle); }
.hearts { marker: url(#heart); }
.drops { marker: url(#drop); }
.bolts { marker: url(#bolt); }
.quotes { marker: url(#quote); }
.notes { marker: url(#note); }
.clouds { marker: url(#cloud); }
.bubbles { marker: url(#bubble); }
.memos { marker: url(#memo); }
.pencils { marker: url(#pencil); }
.cameras { marker: url(#camera); }
.checks { marker: url(#checks); }
.mics { marker: url(#micline); }
.pins { marker: url(#pin); }
.people { marker: url(#person); }
.bells { marker: url(#bell); }
.bottles { marker: url(#bottle); }
.clocks { marker: url(#clock); }
.planes { marker: url(#plane); }

.messages {
    position: relative;
    flex: 1;
    display: flex;
    flex-direction: column;
    align-items: flex-start;
    gap: 2px;
    padding: 8px 69px 22px;
}
.bubble {
    position: relative;
    display: flex;
    flex-direction: column;
    gap: 10px;
    padding: 6px 8px 3px 10px;
    border-radius: 8px;
    background-color: #fff;
    box-shadow: 0 1px 1px rgba(11, 20, 26, 0.15);
}
.bubble.out {
    align-self: flex-end;
    background-color: #d9fdd3;
}
.bubble.in,
.bubble.first {
    margin-top: 12px;
}
.bubble.tail::before {
    content: "";
    position: absolute;
    top: 0;
    width: 8px;
    height: 12px;
    background-color: inherit;
}
.bubble.out.tail {
    border-top-right-radius: 0;
}
.bubble.in.tail {
    border-top-left-radius: 0;
}
.bubble.out.tail::before {
    left: 100%;
    clip-path: polygon(0 0, 100% 0, 100% 10%, 0 100%);
}
.bubble.in.tail::before {
    right: 100%;
    clip-path: polygon(0 0, 100% 0, 100% 100%, 0 10%);
}
.bubble p {
    margin: 0;
    font-size: 15px;
    line-height: 22px;
    height: 22px;
    white-space: nowrap;
}
.bubble a {
    color: #027eb5;
    text-decoration: none;
}
.bubble footer {
    display: flex;
    align-items: center;
    justify-content: flex-end;
    gap: 4px;
    height: 16px;
    font-size: 11px;
    line-height: 16px;
    color: #667781;
}
.ticks {
    width: 18px;
    height: 12px;
}
.bubble.inline {
    flex-direction: row;
    align-items: flex-end;
    padding-bottom: 2px;
}
.bubble.inline p {
    padding-bottom: 7px;
    height: 29px;
}
.bubble.reacted {
    margin-bottom: 28px;
}
.reaction {
    position: absolute;
    top: 54px;
    left: 9px;
    width: 33px;
    height: 27px;
    display: flex;
    align-items: center;
    justify-content: center;
    border-radius: 14px;
    background-color: #fff;
    box-shadow: 0 1px 1px rgba(11, 20, 26, 0.12);
}
.thumb {
    display: inline-block;
    vertical-align: top;
    margin-right: 2px;
}

/* voice message */
.bubble.voice {
    display: grid;
    grid-template-columns: 61px 21px 1fr auto;
    grid-template-rows: 44px 16px;
    gap: 2px 21px;
    width: 370px;
    padding: 6px 8px 5px 11px;
}
.sender {
    position: relative;
    grid-row: 1 / 3;
}
.sender-mic {
    position: absolute;
    left: 42px;
    top: 36px;
    color: #2fb3e3;
}
.logo-text {
    font-family: "Liberation Sans", sans-serif;
    font-size: 6px;
    fill: #5c6478;
}
.play {
    align-self: center;
    padding-top: 10px;
}
.play svg {
    margin: 0 auto;
}
.track {
    grid-column: 3 / 5;
    padding: 16px 0 0 3px;
}
.wave {
    position: relative;
    width: 208px;
    height: 22px;
}
.wave input {
    position: absolute;
    inset: 0;
    width: 100%;
    margin: 0;
    appearance: none;
    background: none;
}
.wave input::-webkit-slider-thumb {
    appearance: none;
    width: 14px;
    height: 14px;
    border-radius: 50%;
    background-color: #53bdfa;
}
.duration {
    grid-column: 3;
    font-size: 11px;
    line-height: 18px;
    color: #667781;
}
.voice footer {
    grid-column: 4;
}

.scrollbar {
    position: relative;
    width: 6px;
    display: flex;
    align-items: flex-end;
    background-color: rgba(255, 255, 255, 0.1);
}
.scroll-thumb {
    width: 6px;
    height: 88.5%;
    background-color: rgba(11, 20, 26, 0.2);
}

.composer {
    height: 68px;
    display: flex;
    align-items: center;
    padding: 0 19px 0 20px;
}
.composer .icon-button + .icon-button {
    margin-left: 6px;
}
.field {
    flex: 1;
    height: 46px;
    display: flex;
    align-items: center;
    margin: 0 11px;
    padding: 0 19px 0 14px;
    border-radius: 8px;
    background-color: #fff;
}
.caret {
    width: 1px;
    height: 22px;
    margin-right: 3px;
    background-color: #111b21;
}
.field input {
    flex: 1;
    min-width: 0;
    padding: 0;
    border: none;
    outline: none;
    font-family: inherit;
    font-size: 16px;
    line-height: 22px;
    color: #111b21;
}
.field input::placeholder {
    color: #667781;
    opacity: 1;
}
.field-dot {
    width: 8px;
    height: 8px;
    margin-top: 8px;
    border-radius: 50%;
    background-color: #008069;
}

.taskbar {
    height: 15px;
    display: flex;
    align-items: flex-end;
    justify-content: flex-end;
    background: linear-gradient(90deg, #27353b, #26292b 70%, #1c2c36 80%, #17262f);
    color: #fff;
}
.taskbar time {
    margin-left: 61px;
    font-size: 11px;
    line-height: 11px;
}
.weather {
    margin-right: 146px;
}
.notify {
    width: 16px;
    height: 3px;
    margin-left: 23px;
    background-color: #fff;
}
```
